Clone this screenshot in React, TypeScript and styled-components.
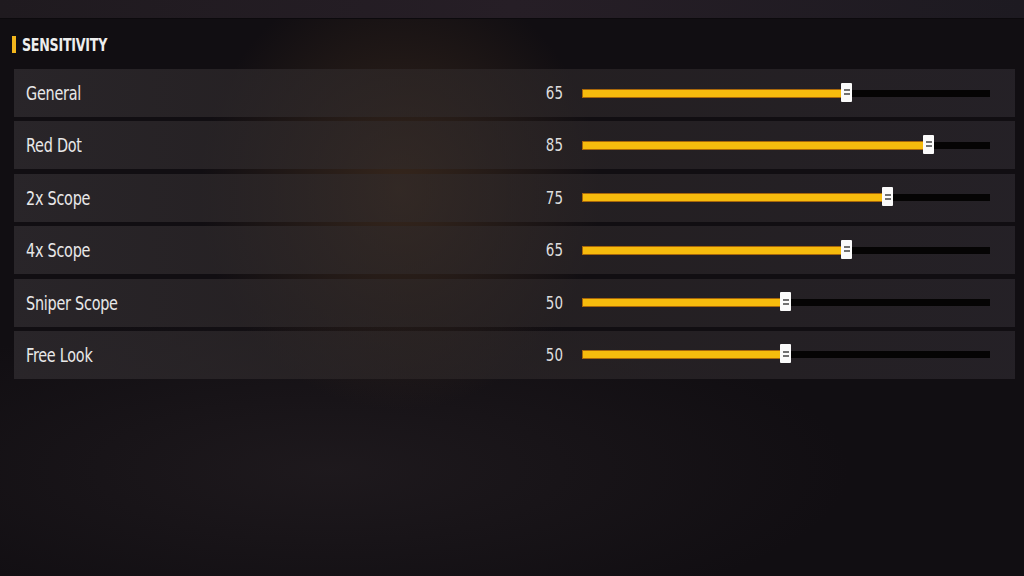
import React from "react";
import styled, { createGlobalStyle } from "styled-components";

const Global = createGlobalStyle`
  html, body { margin: 0; padding: 0; background: #110e12; }
  body { width: 1024px; height: 576px; overflow: hidden; font-family: "DejaVu Sans Condensed", "DejaVu Sans", sans-serif; }
`;

const Screen = styled.div`
  width: 1024px;
  height: 576px;
  display: flex;
  flex-direction: column;
  background:
    radial-gradient(ellipse 200px 220px at 400px 190px, rgba(90, 62, 38, 0.5), rgba(0,0,0,0) 100%),
    radial-gradient(ellipse 520px 160px at 330px 470px, rgba(38, 32, 36, 0.6), rgba(0,0,0,0) 100%),
    #110e12;
`;

const TopBand = styled.div`
  height: 18px;
  flex: none;
  background: linear-gradient(90deg, #1f1a1f, #261e26 50%, #1d1a21 100%);
  border-bottom: 1px solid #0c0a0d;
`;

const Content = styled.div`
  display: flex;
  flex-direction: column;
  padding: 16px 9px 0 14px;
`;

const Header = styled.div`
  display: flex;
  align-items: center;
  gap: 6px;
  height: 18px;
  margin-left: -2px;
  margin-bottom: 16px;
`;

const Accent = styled.div`
  width: 4px;
  height: 17px;
  background: #f2b51c;
`;

const Title = styled.div`
  color: #eeeeee;
  font-size: 18px;
  font-weight: 700;
  letter-spacing: -0.3px;
  transform: scaleX(0.78);
  transform-origin: left center;
`;

const List = styled.div`
  display: flex;
  flex-direction: column;
  gap: 4.4px;
`;

const Row = styled.div`
  height: 48px;
  display: flex;
  align-items: center;
  padding: 0 25px 0 12px;
  background: linear-gradient(90deg, rgba(46, 42, 46, 0.82), rgba(48, 42, 42, 0.6) 40%, rgba(42, 38, 44, 0.78) 100%);
`;

const LabelCell = styled.div`
  flex: 1;
`;

const Label = styled.span`
  display: inline-block;
  color: #e8e8e8;
  font-size: 20px;
  letter-spacing: -0.3px;
  transform: scaleX(0.8);
  transform-origin: left center;
`;

const Value = styled.div`
  width: 40px;
  text-align: right;
  color: #dedede;
  font-size: 17px;
  margin-right: 19px;
  transform: scaleX(0.88);
  transform-origin: right center;
`;

const Track = styled.div`
  position: relative;
  width: 408px;
  height: 7px;
  background: #050404;
`;

const Fill = styled.div`
  position: absolute;
  left: 0;
  top: -1px;
  height: 7px;
  background: #f6bb0d;
  border: 1px solid #a8670a;
  border-right: none;
  box-sizing: content-box;
`;

const Thumb = styled.div`
  position: absolute;
  top: -7px;
  width: 11px;
  height: 19px;
  margin-left: -6px;
  background: #fafafa;
  border-radius: 1px;
  display: flex;
  flex-direction: column;
  align-items: center;
  justify-content: center;
  gap: 2px;
  &::before, &::after {
    content: "";
    width: 6px;
    height: 2px;
    background: #707070;
  }
`;

const items = [
  { name: "General", value: 65 },
  { name: "Red Dot", value: 85 },
  { name: "2x Scope", value: 75 },
  { name: "4x Scope", value: 65 },
  { name: "Sniper Scope", value: 50 },
  { name: "Free Look", value: 50 },
];

export default function App() {
  return (
    <>
      <Global />
      <Screen>
        <TopBand />
        <Content>
          <Header>
            <Accent />
            <Title>SENSITIVITY</Title>
          </Header>
          <List>
            {items.map((it) => {
              const w = Math.round((408 * it.value) / 100);
              return (
                <Row key={it.name}>
                  <LabelCell>
                    <Label>{it.name}</Label>
                  </LabelCell>
                  <Value>{it.value}</Value>
                  <Track>
                    <Fill style={{ width: w }} />
                    <Thumb style={{ left: w }} />
                  </Track>
                </Row>
              );
            })}
          </List>
        </Content>
      </Screen>
    </>
  );
}
